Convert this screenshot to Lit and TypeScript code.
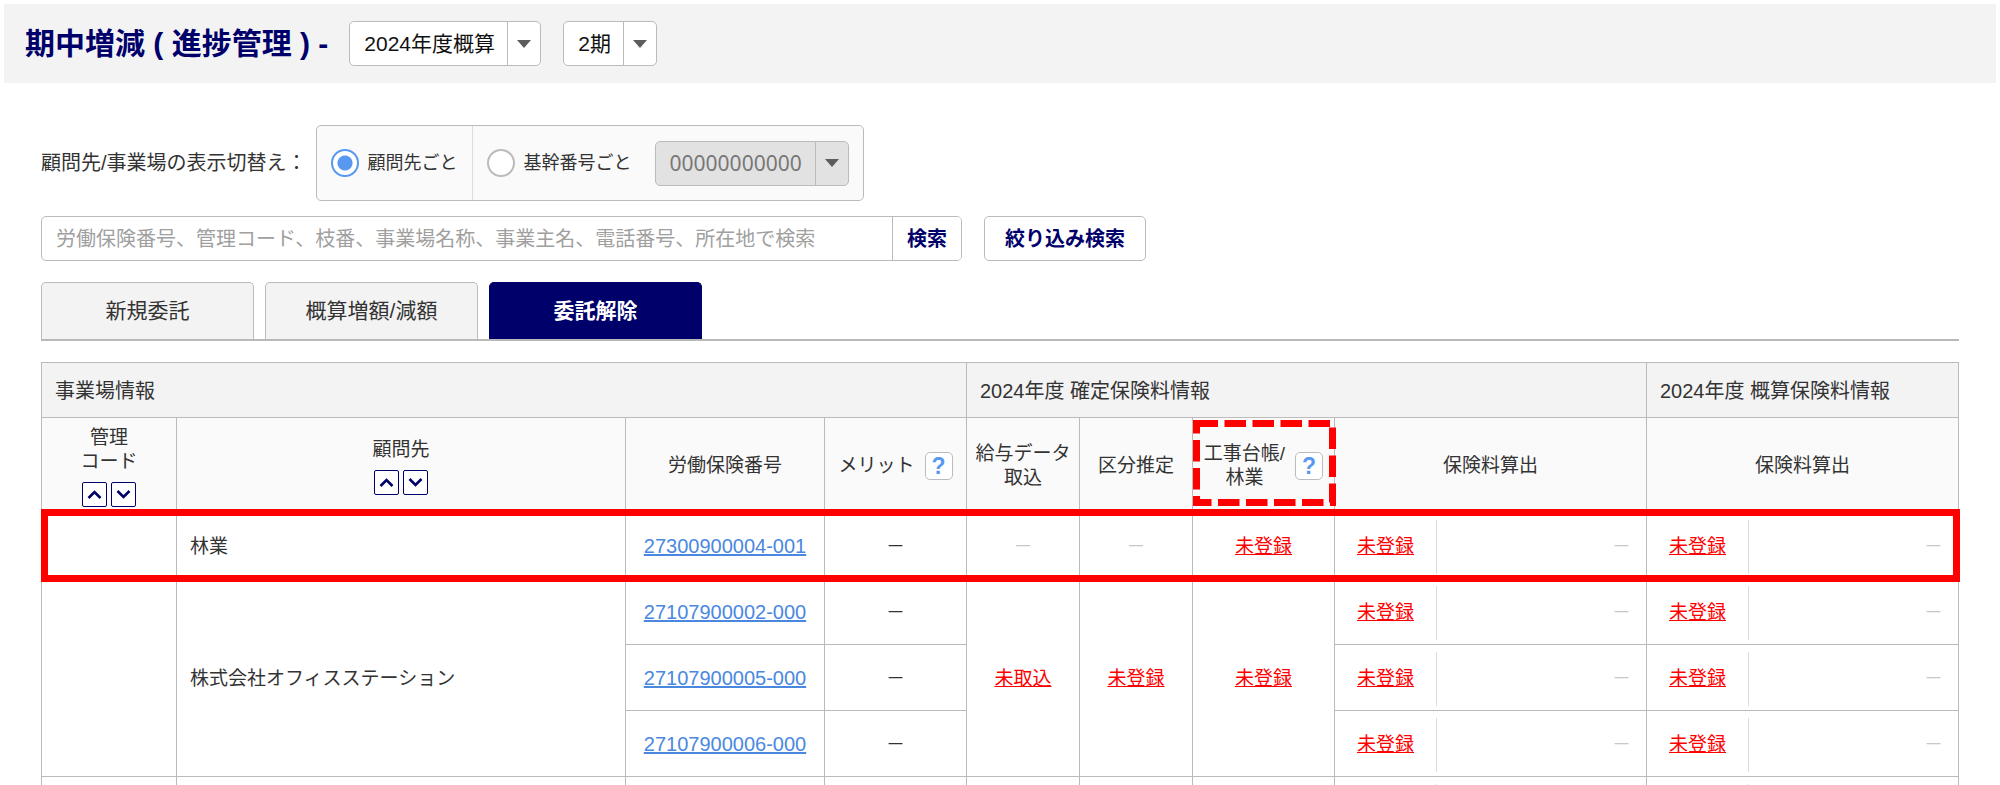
import { LitElement, html, css, svg, nothing } from "lit";
import { customElement, property, state } from "lit/decorators.js";
import { classMap } from "lit/directives/class-map.js";

interface Client {
  name: string;
  offices: string[];
  payroll: string | null;
  category: string | null;
  ledger: string | null;
  highlighted?: boolean;
}

const UNREGISTERED = "未登録";
const TABS = ["新規委託", "概算増額/減額", "委託解除"];
const COLUMNS = ["code", "client", "number", "merit", "payroll", "category", "ledger", "premium", "premium"];

const CLIENTS: Client[] = [
  {
    name: "林業",
    offices: ["27300900004-001"],
    payroll: null,
    category: null,
    ledger: UNREGISTERED,
    highlighted: true,
  },
  {
    name: "株式会社オフィスステーション",
    offices: ["27107900002-000", "27107900005-000", "27107900006-000"],
    payroll: "未取込",
    category: UNREGISTERED,
    ledger: UNREGISTERED,
  },
];

const FONT = css`"Liberation Sans", "Noto Sans CJK JP", sans-serif`;

@customElement("select-box")
class SelectBox extends LitElement {
  @property() label = "";
  @property({ type: Array }) options: string[] = [];
  @property({ type: Boolean }) disabled = false;

  static styles = css`
    :host {
      display: inline-block;
    }
    .box {
      display: grid;
      grid-template-columns: 1fr 33px;
      height: 45px;
      box-sizing: border-box;
      border: 1px solid #bbb;
      border-radius: 5px;
      background: #fff;
      overflow: hidden;
    }
    .box.off {
      background: #e2e2e2;
    }
    .control {
      grid-area: 1 / 1 / 2 / 3;
      appearance: none;
      border: 0;
      margin: 0;
      padding: 0 45px 0 14px;
      background: transparent;
      color: #111;
      font: 21px ${FONT};
    }
    .off .control {
      color: #777;
      opacity: 1;
      font-family: "Noto Sans", "Noto Sans CJK JP", sans-serif;
    }
    .arrow {
      grid-area: 1 / 2;
      display: flex;
      align-items: center;
      justify-content: center;
      border-left: 1px solid #bbb;
      pointer-events: none;
    }
  `;

  render() {
    return html`
      <div class=${classMap({ box: true, off: this.disabled })}>
        <select class="control" aria-label=${this.label} ?disabled=${this.disabled}>
          ${this.options.map((o) => html`<option>${o}</option>`)}
        </select>
        <span class="arrow">
          <svg width="14" height="8" viewBox="0 0 14 8" aria-hidden="true"><path d="M0 0h14L7 8z" fill="#5c5c5c" /></svg>
        </span>
      </div>
    `;
  }
}

@customElement("app-root")
class AppRoot extends LitElement {
  @state() private activeTab = 2;

  static styles = css`
    :host {
      display: block;
      height: 100vh;
      overflow: hidden;
      box-sizing: border-box;
      padding: 4px 4px 0;
      background: #fff;
      color: #333;
      font: 20px/24px ${FONT};
    }
    .header {
      display: flex;
      align-items: center;
      height: 79px;
      padding-left: 21px;
      background: #f3f3f3;
    }
    .title {
      margin: 0 21px 0 0;
      font-size: 30px;
      line-height: 40px;
      font-weight: 700;
      color: #00006a;
    }
    .header select-box {
      margin-right: 22px;
    }
    .content {
      padding: 42px 37px 0;
    }
    .toggle {
      display: flex;
      align-items: center;
      gap: 9px;
      margin-bottom: 15px;
    }
    .choices {
      display: flex;
      height: 76px;
      box-sizing: border-box;
      border: 1px solid #bbb;
      border-radius: 5px;
      background: #fafafa;
    }
    .choice {
      display: flex;
      align-items: center;
      padding: 0 14px;
      gap: 23px;
    }
    .choice + .choice {
      border-left: 1px solid #ddd;
    }
    .option {
      display: flex;
      align-items: center;
      gap: 9px;
      font-size: 18px;
    }
    .radio {
      appearance: none;
      width: 28px;
      height: 28px;
      margin: 0;
      border: 2px solid #bbb;
      border-radius: 50%;
      background: #fff;
    }
    .radio:checked {
      border-color: #5898f0;
      background: radial-gradient(circle, #5898f0 7px, #fff 8px);
    }
    .search {
      display: flex;
      gap: 22px;
      margin-bottom: 21px;
    }
    .search-field {
      display: flex;
      height: 45px;
      width: 921px;
      box-sizing: border-box;
      border: 1px solid #bbb;
      border-radius: 5px;
      overflow: hidden;
    }
    .query {
      flex: 1;
      min-width: 0;
      border: 0;
      padding: 0 14px;
      font: inherit;
      background: transparent;
    }
    .query::placeholder {
      color: #a0a0a0;
      opacity: 1;
    }
    .button {
      border: 1px solid #bbb;
      border-radius: 5px;
      padding: 0 20px;
      background: #fff;
      color: #00006a;
      font: 700 20px/24px ${FONT};
    }
    .search-field .button {
      border-width: 0 0 0 1px;
      border-radius: 0;
      padding: 0 14px;
    }
    .tabs {
      display: flex;
      gap: 11px;
      border-bottom: 2px solid #b9b9b9;
      margin-bottom: 21px;
    }
    .tab {
      width: 213px;
      height: 57px;
      padding: 0;
      border: 1px solid #bbb;
      border-bottom: 0;
      border-radius: 5px 5px 0 0;
      background: #f3f3f3;
      color: #333;
      font: 21px/24px ${FONT};
    }
    .tab.active {
      border-color: #00006a;
      background: #00006a;
      color: #fff;
      font-weight: 700;
    }
    .grid {
      width: 100%;
      table-layout: fixed;
      border-collapse: collapse;
      font-size: 19px;
    }
    .code {
      width: 135px;
    }
    .number {
      width: 199px;
    }
    .merit,
    .ledger {
      width: 142px;
    }
    .payroll,
    .category {
      width: 113px;
    }
    .premium {
      width: 312px;
    }
    .grid th,
    .grid td {
      border: 1px solid #bbb;
      padding: 2px 0 0;
      text-align: center;
      font-weight: 400;
    }
    .grid .group {
      height: 52px;
      padding-left: 13px;
      text-align: left;
      font-size: 20px;
      background: #f3f3f3;
    }
    .grid .column {
      height: 92px;
      background: #fafafa;
    }
    .row {
      position: relative;
      height: 66px;
    }
    .grid .client-name {
      padding-left: 13px;
      text-align: left;
    }
    .marker {
      position: absolute;
      inset: -4px -1px -3px -1px;
      border: 7px solid #f00;
      pointer-events: none;
    }
    .dashed {
      position: relative;
    }
    .dashed-frame {
      position: absolute;
      top: 2px;
      left: 0;
      pointer-events: none;
    }
    .sort {
      display: flex;
      justify-content: center;
      gap: 4px;
      margin-top: 8px;
    }
    .sort-button {
      display: flex;
      align-items: center;
      justify-content: center;
      width: 25px;
      height: 25px;
      padding: 0;
      border: 1px solid #00006a;
      border-radius: 2px;
      background: #fff;
    }
    .with-help {
      display: flex;
      align-items: center;
      justify-content: center;
      gap: 10px;
    }
    .help {
      width: 28px;
      height: 28px;
      padding: 0;
      border: 1px solid #bbb;
      border-radius: 5px;
      background: #fff;
      color: #5898f0;
      font: 700 23px/26px ${FONT};
    }
    .office,
    .pending {
      text-decoration-skip-ink: none;
    }
    .office {
      font-size: 20px;
      color: #4a88e0;
    }
    .pending {
      color: #f00;
    }
    .muted {
      color: #c8c8c8;
    }
    .split {
      display: grid;
      grid-template-columns: 101px 1fr;
      align-items: center;
      height: 54px;
    }
    .amount {
      display: flex;
      align-items: center;
      justify-content: flex-end;
      height: 100%;
      padding-right: 15px;
      border-left: 1px solid #ddd;
      color: #c8c8c8;
    }
  `;

  private sortButtons(name: string) {
    const icon = (d: string) => svg`
      <svg width="15" height="9" viewBox="0 0 15 9" aria-hidden="true">
        <path d=${d} fill="none" stroke="#00006a" stroke-width="2.6" />
      </svg>`;
    return html`
      <div class="sort">
        <button class="sort-button" aria-label="${name} 昇順">${icon("M1.5 8L7.5 2L13.5 8")}</button>
        <button class="sort-button" aria-label="${name} 降順">${icon("M1.5 1L7.5 7L13.5 1")}</button>
      </div>
    `;
  }

  private status(value: string | null) {
    return value ? html`<a class="pending" href="#">${value}</a>` : html`<span class="muted">－</span>`;
  }

  private premium() {
    return html`
      <td>
        <div class="split">
          <span>${this.status(UNREGISTERED)}</span>
          <span class="amount">－</span>
        </div>
      </td>
    `;
  }

  private clientRows(client: Client) {
    const span = client.offices.length;
    return client.offices.map(
      (office, i) => html`
        <tr class="row">
          ${i === 0
            ? html`
                <td rowspan=${span}>${client.highlighted ? html`<span class="marker"></span>` : nothing}</td>
                <td class="client-name" rowspan=${span}>${client.name}</td>
              `
            : nothing}
          <td><a class="office" href="#">${office}</a></td>
          <td>－</td>
          ${i === 0
            ? [client.payroll, client.category, client.ledger].map(
                (v) => html`<td rowspan=${span}>${this.status(v)}</td>`
              )
            : nothing}
          ${this.premium()} ${this.premium()}
        </tr>
      `
    );
  }

  private emptyRow() {
    const split = html`<div class="split"><span></span><span class="amount"></span></div>`;
    return html`
      <tr class="row">
        ${COLUMNS.map((c) => html`<td>${c === "premium" ? split : nothing}</td>`)}
      </tr>
    `;
  }

  render() {
    return html`
      <header class="header">
        <h1 class="title">期中増減 ( 進捗管理 ) -</h1>
        <select-box label="年度" .options=${["2024年度概算"]}></select-box>
        <select-box label="期" .options=${["2期"]}></select-box>
      </header>
      <main class="content">
        <div class="toggle">
          <span id="toggle-label">顧問先/事業場の表示切替え：</span>
          <div class="choices" role="radiogroup" aria-labelledby="toggle-label">
            <div class="choice">
              <label class="option"><input class="radio" type="radio" name="unit" checked />顧問先ごと</label>
            </div>
            <div class="choice">
              <label class="option"><input class="radio" type="radio" name="unit" />基幹番号ごと</label>
              <select-box label="基幹番号" .options=${["00000000000"]} disabled></select-box>
            </div>
          </div>
        </div>
        <form class="search" @submit=${(e: Event) => e.preventDefault()}>
          <div class="search-field">
            <input
              class="query"
              type="text"
              aria-label="検索"
              placeholder="労働保険番号、管理コード、枝番、事業場名称、事業主名、電話番号、所在地で検索"
            />
            <button class="button">検索</button>
          </div>
          <button class="button" type="button">絞り込み検索</button>
        </form>
        <nav class="tabs">
          ${TABS.map(
            (t, i) => html`
              <button class=${classMap({ tab: true, active: i === this.activeTab })} @click=${() => (this.activeTab = i)}>
                ${t}
              </button>
            `
          )}
        </nav>
        <table class="grid">
          <colgroup>
            ${COLUMNS.map((c) => html`<col class=${c} />`)}
          </colgroup>
          <thead>
            <tr>
              <th class="group" colspan="4">事業場情報</th>
              <th class="group" colspan="4">2024年度 確定保険料情報</th>
              <th class="group">2024年度 概算保険料情報</th>
            </tr>
            <tr>
              <th class="column">管理<br />コード${this.sortButtons("管理コード")}</th>
              <th class="column">顧問先${this.sortButtons("顧問先")}</th>
              <th class="column">労働保険番号</th>
              <th class="column">
                <div class="with-help"><span>メリット</span><button class="help">?</button></div>
              </th>
              <th class="column">給与データ<br />取込</th>
              <th class="column">区分推定</th>
              <th class="column dashed">
                <div class="with-help"><span>工事台帳/<br />林業</span><button class="help">?</button></div>
                <svg class="dashed-frame" width="143" height="86" viewBox="0 0 143 86" aria-hidden="true">
                  <rect
                    x="3.5"
                    y="3.5"
                    width="136"
                    height="79"
                    fill="none"
                    stroke="#f00"
                    stroke-width="7"
                    stroke-dasharray="21.5 6.5"
                  />
                </svg>
              </th>
              <th class="column">保険料算出</th>
              <th class="column">保険料算出</th>
            </tr>
          </thead>
          <tbody>
            ${CLIENTS.map((c) => this.clientRows(c))} ${this.emptyRow()}
          </tbody>
        </table>
      </main>
    `;
  }
}
